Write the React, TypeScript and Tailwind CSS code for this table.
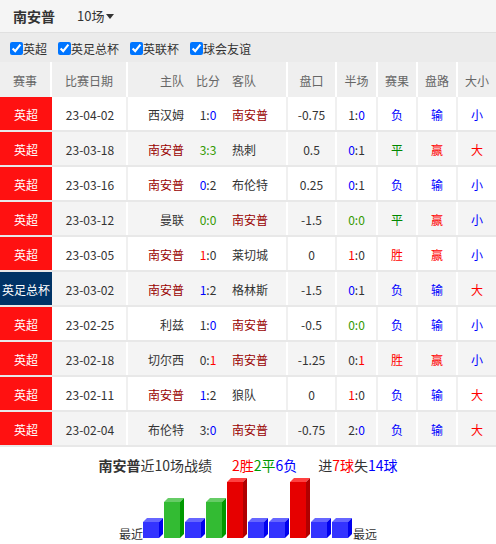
import React from 'react'

type Row = {
  league: string
  date: string
  home: string
  score: string
  away: string
  line: string
  half: string
  result: string
  pan: string
  size: string
}

const rows: Row[] = [
  { league: '英超', date: '23-04-02', home: '西汉姆', score: '1:0', away: '南安普', line: '-0.75', half: '1:0', result: '负', pan: '输', size: '小' },
  { league: '英超', date: '23-03-18', home: '南安普', score: '3:3', away: '热刺', line: '0.5', half: '0:1', result: '平', pan: '赢', size: '大' },
  { league: '英超', date: '23-03-16', home: '南安普', score: '0:2', away: '布伦特', line: '0.25', half: '0:1', result: '负', pan: '输', size: '小' },
  { league: '英超', date: '23-03-12', home: '曼联', score: '0:0', away: '南安普', line: '-1.5', half: '0:0', result: '平', pan: '赢', size: '小' },
  { league: '英超', date: '23-03-05', home: '南安普', score: '1:0', away: '莱切城', line: '0', half: '1:0', result: '胜', pan: '赢', size: '小' },
  { league: '英足总杯', date: '23-03-02', home: '南安普', score: '1:2', away: '格林斯', line: '-1.5', half: '0:1', result: '负', pan: '输', size: '大' },
  { league: '英超', date: '23-02-25', home: '利兹', score: '1:0', away: '南安普', line: '-0.5', half: '0:0', result: '负', pan: '输', size: '小' },
  { league: '英超', date: '23-02-18', home: '切尔西', score: '0:1', away: '南安普', line: '-1.25', half: '0:1', result: '胜', pan: '赢', size: '小' },
  { league: '英超', date: '23-02-11', home: '南安普', score: '1:2', away: '狼队', line: '0', half: '1:0', result: '负', pan: '输', size: '大' },
  { league: '英超', date: '23-02-04', home: '布伦特', score: '3:0', away: '南安普', line: '-0.75', half: '2:0', result: '负', pan: '输', size: '大' },
]

const TEAM = '南安普'
const grid = 'grid grid-cols-[52px_76px_60px_40px_60px_49px_41px_40px_40px_38px]'
const cell = 'flex items-center pt-[2px]'

function Score({ value, homeIsUs }: { value: string; homeIsUs: boolean }) {
  const [a, b] = value.split(':').map(Number)
  if (a === b) return <span className="text-[#339900]">{value}</span>
  const us = homeIsUs ? a : b
  const them = homeIsUs ? b : a
  const cls = us > them ? 'text-[#ff0000]' : 'text-[#0000ff]'
  return homeIsUs ? (
    <span>
      <span className={cls}>{a}</span>:{b}
    </span>
  ) : (
    <span>
      {a}:<span className={cls}>{b}</span>
    </span>
  )
}

function Team({ name }: { name: string }) {
  return <span className={name === TEAM ? 'text-[#990000]' : ''}>{name}</span>
}

const resultColor: Record<string, string> = {
  负: 'text-[#0000ff]',
  平: 'text-[#008800]',
  胜: 'text-[#ff0000]',
  输: 'text-[#0000ff]',
  赢: 'text-[#ff0000]',
  小: 'text-[#0000ff]',
  大: 'text-[#ff0000]',
}

function Bars() {
  const seq = ['L', 'D', 'L', 'D', 'W', 'L', 'L', 'W', 'L', 'L']
  const colors: Record<string, { h: number; front: string; top: string; side: string }> = {
    L: { h: 16, front: '#3333ff', top: '#6666ff', side: '#0000ee' },
    D: { h: 36, front: '#33bb33', top: '#66cc66', side: '#009900' },
    W: { h: 56, front: '#e60000', top: '#ff4040', side: '#b00000' },
  }
  const B = 61
  return (
    <svg width="210" height="62" viewBox="0 0 210 62" className="block">
      {seq.map((k, i) => {
        const c = colors[k]
        const x = i * 21
        const y = B - c.h
        return (
          <g key={i}>
            <rect x={x} y={y} width="16" height={c.h} fill={c.front} />
            <polygon points={`${x},${y} ${x + 4},${y - 4} ${x + 20},${y - 4} ${x + 16},${y}`} fill={c.top} />
            <polygon points={`${x + 16},${y} ${x + 20},${y - 4} ${x + 20},${B - 4} ${x + 16},${B}`} fill={c.side} />
          </g>
        )
      })}
    </svg>
  )
}

export default function App() {
  return (
    <div
      className="w-[496px] h-[544px] bg-white text-[#333] text-[12px] overflow-hidden"
      style={{ fontFamily: '"Noto Sans CJK SC", "Microsoft YaHei", sans-serif' }}
    >
      <div className="h-[33px] bg-[#f5f5f5] border-b border-[#e0e0e0] flex items-center">
        <span className="ml-[13px] text-[14px] font-bold text-[#333]">南安普</span>
        <span className="ml-[22px] text-[13px] text-[#333] flex items-center">
          10场
          <svg width="8" height="5" viewBox="0 0 8 5" className="ml-[2px]">
            <polygon points="0,0 8,0 4,5" fill="#333" />
          </svg>
        </span>
      </div>

      <div className="h-[29px] bg-[#ebebeb] flex items-center pt-[2px] pl-[10px] gap-[11px]">
        {['英超', '英足总杯', '英联杯', '球会友谊'].map((t) => (
          <label key={t} className="flex items-center">
            <input type="checkbox" defaultChecked className="m-0 w-[13px] h-[13px]" />
            <span className="text-[12px] text-[#333]">{t}</span>
          </label>
        ))}
      </div>

      <div className={`${grid} h-[35px] bg-[#efefef] text-[#666] items-stretch`}>
        <div className={`${cell} justify-center border-r-2 border-white`}>赛事</div>
        <div className={`${cell} justify-center border-r-2 border-white`}>比赛日期</div>
        <div className={`${cell} justify-end pr-[4px]`}>主队</div>
        <div className={`${cell} justify-center`}>比分</div>
        <div className={`${cell} pl-[4px] border-r-2 border-white`}>客队</div>
        <div className={`${cell} justify-center border-r-2 border-white`}>盘口</div>
        <div className={`${cell} justify-center border-r-2 border-white`}>半场</div>
        <div className={`${cell} justify-center border-r-2 border-white`}>赛果</div>
        <div className={`${cell} justify-center border-r-2 border-white`}>盘路</div>
        <div className={`${cell} justify-center`}>大小</div>
      </div>

      {rows.map((r, i) => {
        const gray = i % 2 === 1
        const bd = gray ? 'border-white' : 'border-[#f0f0f0]'
        const homeIsUs = r.home === TEAM
        return (
          <div
            key={r.date}
            className={`${grid} h-[35px] border-b-2 border-[#e8e8e8] ${gray ? 'bg-[#f4f4f4]' : 'bg-white'}`}
          >
            <div
              className={`${cell} justify-center text-white ${
                r.league === '英超' ? 'bg-[#ff1111]' : 'bg-[#003366]'
              }`}
            >
              {r.league}
            </div>
            <div className={`${cell} justify-center border-r-2 ${bd} border-l-2 border-l-transparent`}>{r.date}</div>
            <div className={`${cell} justify-end pr-[4px]`}>
              <Team name={r.home} />
            </div>
            <div className={`${cell} justify-center`}>
              <Score value={r.score} homeIsUs={homeIsUs} />
            </div>
            <div className={`${cell} pl-[4px] border-r-2 ${bd}`}>
              <Team name={r.away} />
            </div>
            <div className={`${cell} justify-center border-r-2 ${bd}`}>{r.line}</div>
            <div className={`${cell} justify-center border-r-2 ${bd}`}>
              <Score value={r.half} homeIsUs={homeIsUs} />
            </div>
            <div className={`${cell} justify-center border-r-2 ${bd} ${resultColor[r.result]}`}>{r.result}</div>
            <div className={`${cell} justify-center border-r-2 ${bd} ${resultColor[r.pan]}`}>{r.pan}</div>
            <div className={`${cell} justify-center ${resultColor[r.size]}`}>{r.size}</div>
          </div>
        )
      })}

      <div className="pt-[8px] flex justify-center text-[14px] leading-[20px]">
        <span>
          <span className="font-bold">南安普</span>近10场战绩
        </span>
        <span className="ml-[20px]">
          <span className="text-[#ff0000]">2胜</span>
          <span className="text-[#009900]">2平</span>
          <span className="text-[#0000ff]">6负</span>
        </span>
        <span className="ml-[21px]">
          进<span className="text-[#ff0000]">7球</span>失<span className="text-[#0000ff]">14球</span>
        </span>
      </div>

      <div className="mt-[2px] flex justify-center items-end">
        <span className="text-[12px] leading-none mb-[-1px]">最近</span>
        <Bars />
        <span className="text-[12px] leading-none mb-[-1px]">最远</span>
      </div>
    </div>
  )
}
